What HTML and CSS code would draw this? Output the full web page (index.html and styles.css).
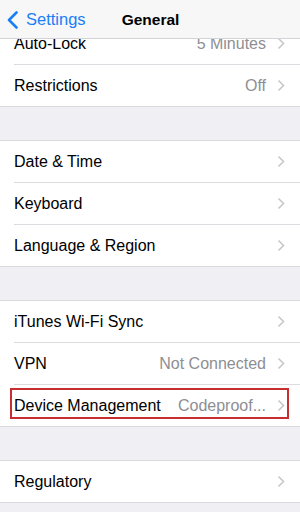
FILE: index.html
```html
<!DOCTYPE html>
<html>
<head>
<meta charset="utf-8">
<link rel="stylesheet" href="styles.css">
</head>
<body>
<div class="screen">
  <header class="nav">
    <div class="back">
      <svg class="back-icon" width="11" height="18" viewBox="0 0 11 18"><polyline points="9.5,1.5 2,9 9.5,16.5" fill="none" stroke="#1a7ef7" stroke-width="2.6" stroke-linecap="round" stroke-linejoin="round"/></svg>
      <span>Settings</span>
    </div>
    <div class="title">General</div>
  </header>
  <main class="content">
    <section class="group first">
      <div class="row"><div class="cell"><span class="label">Auto-Lock</span><span class="detail">5 Minutes</span><svg class="chev" width="8" height="13" viewBox="0 0 8 13"><polyline points="1.5,1.5 6.5,6.5 1.5,11.5" fill="none" stroke="#c7c7cc" stroke-width="1.6"/></svg></div></div>
      <div class="row"><div class="cell"><span class="label">Restrictions</span><span class="detail">Off</span><svg class="chev" width="8" height="13" viewBox="0 0 8 13"><polyline points="1.5,1.5 6.5,6.5 1.5,11.5" fill="none" stroke="#c7c7cc" stroke-width="1.6"/></svg></div></div>
    </section>
    <section class="group">
      <div class="row"><div class="cell"><span class="label">Date &amp; Time</span><span class="detail"></span><svg class="chev" width="8" height="13" viewBox="0 0 8 13"><polyline points="1.5,1.5 6.5,6.5 1.5,11.5" fill="none" stroke="#c7c7cc" stroke-width="1.6"/></svg></div></div>
      <div class="row"><div class="cell"><span class="label">Keyboard</span><span class="detail"></span><svg class="chev" width="8" height="13" viewBox="0 0 8 13"><polyline points="1.5,1.5 6.5,6.5 1.5,11.5" fill="none" stroke="#c7c7cc" stroke-width="1.6"/></svg></div></div>
      <div class="row"><div class="cell"><span class="label">Language &amp; Region</span><span class="detail"></span><svg class="chev" width="8" height="13" viewBox="0 0 8 13"><polyline points="1.5,1.5 6.5,6.5 1.5,11.5" fill="none" stroke="#c7c7cc" stroke-width="1.6"/></svg></div></div>
    </section>
    <section class="group">
      <div class="row"><div class="cell"><span class="label">iTunes Wi-Fi Sync</span><span class="detail"></span><svg class="chev" width="8" height="13" viewBox="0 0 8 13"><polyline points="1.5,1.5 6.5,6.5 1.5,11.5" fill="none" stroke="#c7c7cc" stroke-width="1.6"/></svg></div></div>
      <div class="row"><div class="cell"><span class="label">VPN</span><span class="detail">Not Connected</span><svg class="chev" width="8" height="13" viewBox="0 0 8 13"><polyline points="1.5,1.5 6.5,6.5 1.5,11.5" fill="none" stroke="#c7c7cc" stroke-width="1.6"/></svg></div></div>
      <div class="row highlighted"><div class="cell"><span class="label">Device Management</span><span class="detail">Codeproof...</span><svg class="chev" width="8" height="13" viewBox="0 0 8 13"><polyline points="1.5,1.5 6.5,6.5 1.5,11.5" fill="none" stroke="#c7c7cc" stroke-width="1.6"/></svg></div><div class="mark"></div></div>
    </section>
    <section class="group">
      <div class="row"><div class="cell"><span class="label">Regulatory</span><span class="detail"></span><svg class="chev" width="8" height="13" viewBox="0 0 8 13"><polyline points="1.5,1.5 6.5,6.5 1.5,11.5" fill="none" stroke="#c7c7cc" stroke-width="1.6"/></svg></div></div>
    </section>
  </main>
</div>
</body>
</html>
```

FILE: styles.css
```css
* { box-sizing: border-box; }
html, body { margin: 0; padding: 0; }
body {
  width: 300px;
  height: 512px;
  overflow: hidden;
  background: #efeff4;
  font-family: "Liberation Sans", Arial, sans-serif;
  color: #000;
}
.screen {
  position: relative;
  width: 300px;
  height: 512px;
  overflow: hidden;
}
.nav {
  position: absolute;
  top: 0;
  left: 0;
  right: 0;
  height: 39px;
  background: #f7f7f8;
  border-bottom: 1px solid #d4d4d8;
  z-index: 2;
}
.back {
  position: absolute;
  left: 7px;
  top: 10px;
  display: flex;
  align-items: center;
  gap: 8px;
  color: #1a7ef7;
  font-size: 16.5px;
}
.back-icon { display: block; }
.title {
  text-align: center;
  font-size: 15.5px;
  font-weight: bold;
  line-height: 39px;
  padding-left: 1px;
}
.content {
  padding-top: 23px;
}
.group {
  background: #fff;
  border-top: 1px solid #d9d9de;
  border-bottom: 1px solid #d9d9de;
  margin-top: 33px;
}
.group.first { margin-top: 0; border-top: none; }
.row {
  position: relative;
  padding-left: 14px;
}
.row + .row .cell { border-top: 1px solid #dcdce0; }
.cell {
  height: 41px;
  display: flex;
  align-items: center;
  padding-right: 15px;
  font-size: 16px;
}
.row + .row .cell { height: 42px; }
.label { flex: 1; white-space: nowrap; }
.detail {
  color: #8e8e93;
  margin-right: 11px;
  white-space: nowrap;
}
.chev { display: block; flex: none; }
.mark {
  position: absolute;
  left: 10px;
  top: 4px;
  width: 279px;
  height: 31px;
  border: 2px solid #c62e31;
}
```
